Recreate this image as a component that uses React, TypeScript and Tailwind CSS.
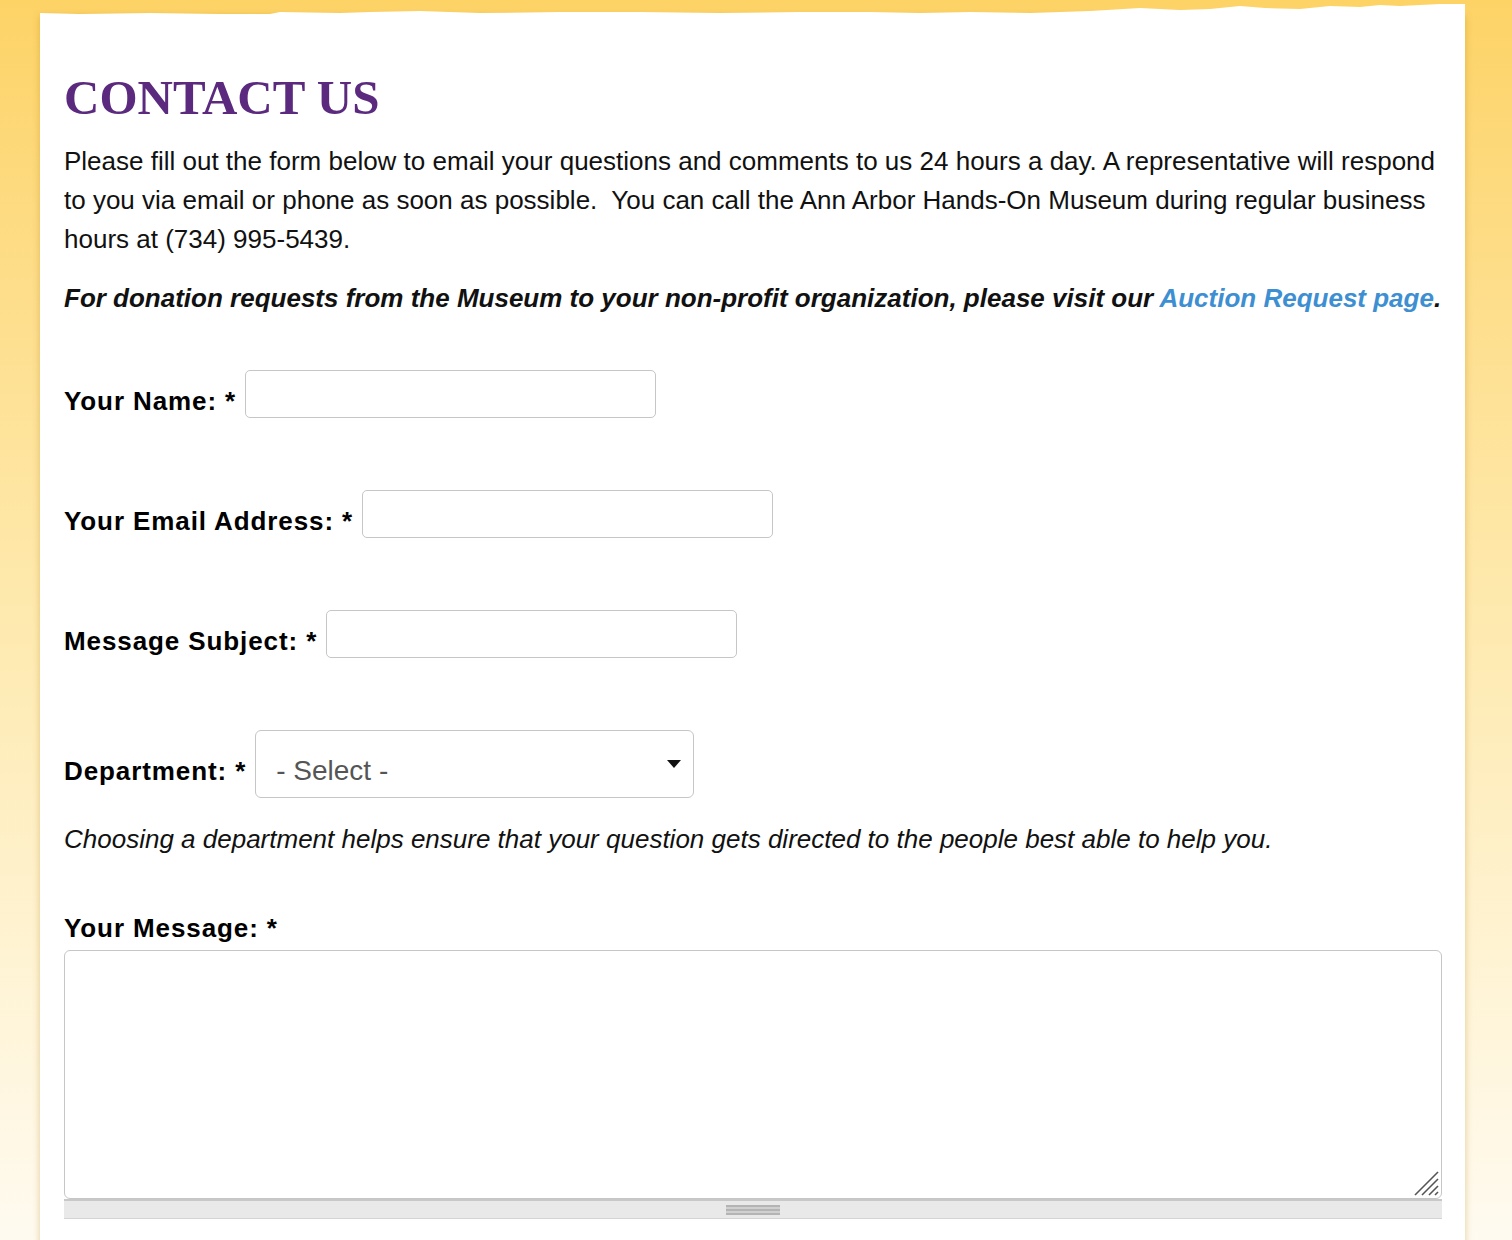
import React from "react";

const sans = "font-['Liberation_Sans',Arial,sans-serif]";

const Field = ({ label, width }: { label: string; width: string }) => (
  <div className="flex items-end gap-[9px] mb-[72px]">
    <label className="text-[26px] leading-[29px] tracking-[0.9px] font-bold text-black mb-[2px]">{label}</label>
    <input
      type="text"
      className={`${width} h-[48px] rounded-[5px] border-[1.5px] border-[#c6c6c6] bg-white outline-none`}
    />
  </div>
);

export default function App() {
  return (
    <div
      className={`${sans} min-h-[1240px] bg-gradient-to-b from-[#fdd366] via-[#feeab0] to-[#fffbf2] pt-[16px] pl-[40px] overflow-hidden`}
    >
      <div className="relative w-[1425px] bg-white pl-[24px] pr-[22px] pt-[57px] pb-[40px] shadow-[0_0_7px_rgba(170,120,0,0.35)]">
        {/* torn paper edge */}
        <svg
          className="absolute left-0 -top-[12px] w-[1425px] h-[13px]"
          viewBox="0 0 1425 13"
          preserveAspectRatio="none"
        >
          <polygon
            fill="#ffffff"
            points="0,13 0,1 40,2 110,1 180,2 230,2 240,0 300,1 330,0 380,-1 440,1 520,0 600,0 680,1 760,0 830,0 880,1 930,0 990,1 1050,-1 1100,-4 1140,-2 1170,-3 1200,-6 1225,-4 1260,-3 1290,-6 1320,-5 1340,-7 1360,-6 1400,-8 1425,-8 1425,13"
            transform="translate(0,8)"
          />
        </svg>

        <h1 className="font-['Liberation_Serif',Georgia,serif] text-[49px] leading-none font-bold text-[#5b2a7f] mb-[20px]">
          CONTACT US
        </h1>

        <p className="text-[26px] leading-[39px] text-[#111] mb-[20px]">
          Please fill out the form below to email your questions and comments to us 24 hours a day. A representative
          will respond to you via email or phone as soon as possible.&nbsp; You can call the Ann Arbor Hands-On Museum
          during regular business hours at (734) 995-5439.
        </p>

        <p className="text-[26px] leading-[39px] text-[#111] font-bold italic mb-[52px]">
          For donation requests from the Museum to your non-profit organization, please visit our{" "}
          <a href="#" className="text-[#3d8fd2]">
            Auction Request page
          </a>
          .
        </p>

        <form>
          <Field label="Your Name: *" width="w-[411px]" />
          <Field label="Your Email Address: *" width="w-[411px]" />
          <Field label="Message Subject: *" width="w-[411px]" />

          <div className="flex items-end gap-[9px]">
            <label className="text-[26px] leading-[29px] tracking-[0.9px] font-bold text-black mb-[12px]">
              Department: *
            </label>
            <div className="relative w-[439px] h-[68px]">
              <select className="appearance-none w-full h-full rounded-[6px] border-[1.5px] border-[#c6c6c6] bg-white pl-[20px] pt-[14px] text-[28px] text-[#555] outline-none">
                <option>- Select -</option>
              </select>
              <svg className="absolute right-[13px] top-[30px] w-[14px] h-[8px] pointer-events-none" viewBox="0 0 14 8">
                <polygon points="0,0 14,0 7,8" fill="#111" />
              </svg>
            </div>
          </div>

          <p className="text-[26px] leading-[29px] italic text-[#111] mt-[27px] mb-[60px]">
            Choosing a department helps ensure that your question gets directed to the people best able to help you.
          </p>

          <label className="block text-[26px] leading-[29px] tracking-[0.9px] font-bold text-black mb-[7px]">
            Your Message: *
          </label>
          <div className="w-[1378px]">
            <div className="relative">
              <textarea className="block w-full h-[249px] rounded-[6px] border-[1.5px] border-[#c6c6c6] bg-white outline-none resize-none" />
              <svg className="absolute right-[3px] bottom-[3px] w-[26px] h-[26px] pointer-events-none" viewBox="0 0 26 26">
                <g stroke="#555" strokeWidth="1.6">
                  <line x1="2" y1="25" x2="25" y2="2" />
                  <line x1="9" y1="25" x2="25" y2="9" />
                  <line x1="16" y1="25" x2="25" y2="16" />
                  <line x1="22" y1="25" x2="25" y2="22" />
                </g>
              </svg>
            </div>
            <div className="flex items-center justify-center h-[20px] bg-[#e9e9e9] border-t-[2px] border-[#c8c8c8] border-b border-b-[#d4d4d4]">
              <div className="flex flex-col w-[54px]">
                <div className="h-[2px] bg-[#b4b4b4]" />
                <div className="h-[2px] bg-[#d0d0d0]" />
                <div className="h-[2px] bg-[#b4b4b4]" />
                <div className="h-[2px] bg-[#d0d0d0]" />
                <div className="h-[2px] bg-[#b4b4b4]" />
              </div>
            </div>
          </div>
        </form>
      </div>
    </div>
  );
}
